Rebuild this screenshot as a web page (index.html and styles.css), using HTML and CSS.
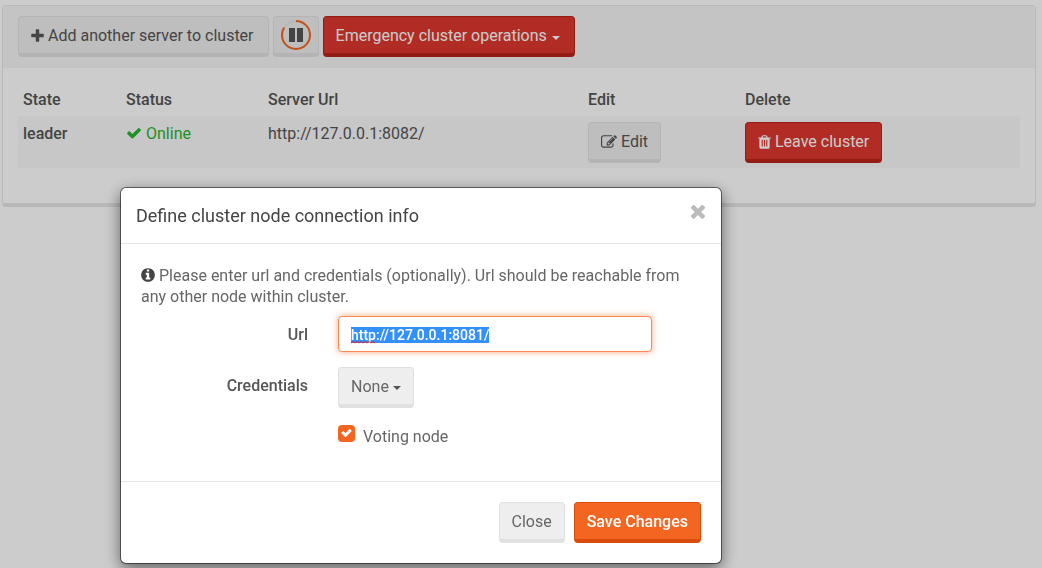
FILE: index.html
```html
<!DOCTYPE html>
<html lang="en">
<head>
<meta charset="utf-8">
<title>Cluster</title>
<link rel="stylesheet" href="styles.css">
</head>
<body>
<main class="panel">
  <div class="panel-heading">
    <button type="button" class="btn"><svg class="icon icon-narrow" viewBox="192 0 1408 1792" aria-hidden="true"><path d="M1600 736v192q0 40-28 68t-68 28h-416v416q0 40-28 68t-68 28h-192q-40 0-68-28t-28-68v-416h-416q-40 0-68-28t-28-68v-192q0-40 28-68t68-28h416v-416q0-40 28-68t68-28h192q40 0 68 28t28 68v416h416q40 0 68 28t28 68z"/></svg>Add another server to cluster</button>
    <button type="button" class="btn btn-pause" aria-label="Pause refresh"><svg class="pause" viewBox="0 0 32 32" aria-hidden="true"><circle class="pause-track" cx="16" cy="16" r="14"/><circle class="pause-ring" cx="16" cy="16" r="14" pathLength="100" stroke-dasharray="84 16" transform="rotate(-90 16 16)"/><path class="pause-bars" d="M9 9h6v14H9zM17 9h6v14h-6z"/></svg></button>
    <button type="button" class="btn btn-danger" aria-haspopup="menu">Emergency cluster operations<span class="caret"></span></button>
  </div>
  <div class="panel-body">
    <table class="nodes">
      <colgroup><col class="col-state"><col class="col-status"><col class="col-url"><col class="col-edit"><col></colgroup>
      <thead>
        <tr><th scope="col">State</th><th scope="col">Status</th><th scope="col">Server Url</th><th scope="col">Edit</th><th scope="col">Delete</th></tr>
      </thead>
      <tbody>
        <tr>
          <th scope="row">leader</th>
          <td class="online"><svg class="icon" viewBox="0 0 1792 1792" aria-hidden="true"><path d="M1671 566q0 40-28 68l-724 724-136 136q-28 28-68 28t-68-28l-136-136-362-362q-28-28-28-68t28-68l136-136q28-28 68-28t68 28l294 295 656-657q28-28 68-28t68 28l136 136q28 28 28 68z"/></svg>Online</td>
          <td>http://127.0.0.1:8082/</td>
          <td><button type="button" class="btn"><svg class="icon" viewBox="0 0 1792 1792" aria-hidden="true"><path d="M888 1184l116-116-152-152-116 116v56h96v96h56zm440-720q-16-16-33 1l-350 350q-17 17-1 33t33-1l350-350q17-17 1-33zm80 594v190q0 119-84.5 203.5t-203.5 84.5h-832q-119 0-203.5-84.5t-84.5-203.5v-832q0-119 84.5-203.5t203.5-84.5h832q63 0 117 25 15 7 18 23 3 17-9 29l-49 49q-14 14-32 8-23-6-45-6h-832q-66 0-113 47t-47 113v832q0 66 47 113t113 47h832q66 0 113-47t47-113v-126q0-13 9-22l64-64q15-15 35-7t20 29zm-96-738l288 288-672 672h-288v-288zm444 132l-92 92-288-288 92-92q28-28 68-28t68 28l152 152q28 28 28 68t-28 68z"/></svg>Edit</button></td>
          <td><button type="button" class="btn btn-danger"><svg class="icon icon-narrow" viewBox="192 0 1408 1792" aria-hidden="true"><path d="M704 1376v-704q0-14-9-23t-23-9h-64q-14 0-23 9t-9 23v704q0 14 9 23t23 9h64q14 0 23-9t9-23zm256 0v-704q0-14-9-23t-23-9h-64q-14 0-23 9t-9 23v704q0 14 9 23t23 9h64q14 0 23-9t9-23zm256 0v-704q0-14-9-23t-23-9h-64q-14 0-23 9t-9 23v704q0 14 9 23t23 9h64q14 0 23-9t9-23zm-544-992h448l-48-117q-7-9-17-11h-317q-10 2-17 11zm928 32v64q0 14-9 23t-23 9h-96v948q0 83-47 143.5t-113 60.5h-832q-66 0-113-58.5t-47-141.5v-952h-96q-14 0-23-9t-9-23v-64q0-14 9-23t23-9h309l70-167q15-37 54-63t79-26h320q40 0 79 26t54 63l70 167h309q14 0 23 9t9 23z"/></svg>Leave cluster</button></td>
        </tr>
      </tbody>
    </table>
  </div>
</main>

<div class="backdrop">
  <form class="modal" role="dialog" aria-modal="true" aria-labelledby="modal-title">
    <header class="modal-header">
      <h1 class="modal-title" id="modal-title">Define cluster node connection info</h1>
      <button type="button" class="close" aria-label="Dismiss"><svg viewBox="302 302 1188 1252" aria-hidden="true"><path d="M1490 1322q0 40-28 68l-136 136q-28 28-68 28t-68-28l-294-294-294 294q-28 28-68 28t-68-28l-136-136q-28-28-28-68t28-68l294-294-294-294q-28-28-28-68t28-68l136-136q28-28 68-28t68 28l294 294 294-294q28-28 68-28t68 28l136 136q28 28 28 68t-28 68l-294 294 294 294q28 28 28 68z"/></svg></button>
    </header>
    <div class="modal-body">
      <p class="hint"><svg class="icon icon-info" viewBox="128 0 1536 1792" aria-hidden="true"><path d="M1152 1376v-160q0-14-9-23t-23-9h-96v-512q0-14-9-23t-23-9h-320q-14 0-23 9t-9 23v160q0 14 9 23t23 9h96v320h-96q-14 0-23 9t-9 23v160q0 14 9 23t23 9h448q14 0 23-9t9-23zm-128-896v-160q0-14-9-23t-23-9h-192q-14 0-23 9t-9 23v160q0 14 9 23t23 9h192q14 0 23-9t9-23zm640 416q0 209-103 385.5t-279.5 279.5-385.5 103-385.5-103-279.5-279.5-103-385.5 103-385.5 279.5-279.5 385.5-103 385.5 103 279.5 279.5 103 385.5z"/></svg>Please enter url and credentials (optionally). Url should be reachable from any other node within cluster.</p>
      <div class="fields">
        <label class="field-label" for="node-url">Url</label>
        <div class="url-field">
          <input class="text-input" id="node-url" type="text" value="http://127.0.0.1:8081/" spellcheck="false" autofocus>
          <svg class="squiggle" viewBox="0 0 26 3" aria-hidden="true"><path d="M0 2l2-1.500 2 1.500 2-1.500 2 1.500 2-1.500 2 1.500 2-1.500 2 1.500 2-1.500 2 1.500 2-1.500 2 1.500"/></svg>
        </div>
        <label class="field-label" for="credentials">Credentials</label>
        <div class="select-wrap">
          <select class="btn select" id="credentials"><option>None</option></select>
          <span class="caret caret-select"></span>
        </div>
        <label class="check-label"><input class="check" type="checkbox" checked>Voting node</label>
      </div>
    </div>
    <footer class="modal-footer">
      <button type="button" class="btn">Close</button>
      <button type="submit" class="btn btn-primary">Save Changes</button>
    </footer>
  </form>
</div>
<script src="script.js"></script>
</body>
</html>
```

FILE: styles.css
```css
* { box-sizing: border-box; }

body {
  margin: 5px 6px 0 2px;
  background: #fff;
  color: #555;
  font: 16px/22px Roboto, sans-serif;
}

.panel {
  background: #fff;
  border: 1px solid #e7e7e7;
  border-bottom-width: 4px;
  border-radius: 4px;
}

.panel-heading {
  display: flex;
  gap: 4px;
  padding: 10px 15px 11px;
  background: #f6f6f6;
}

.panel-body { padding: 15px 15px 35px; }

.btn {
  display: inline-flex;
  align-items: center;
  height: 41px;
  padding: 2px 12px 0;
  border: 1px solid #e1e1e1;
  border-bottom-width: 4px;
  border-radius: 4px;
  background: #eee;
  color: #555;
  font: inherit;
  white-space: nowrap;
}

.panel-heading .btn { padding: 2px 14px 0 12px; }
.btn-danger { background: #dd372d; border-color: #b8241a; color: #fff; }
.btn-primary { background: #f36622; border-color: #d94c0c; color: #fff; font-weight: 500; }

.icon {
  width: 16px;
  height: 16px;
  margin-right: 4px;
  fill: currentColor;
  vertical-align: -2px;
}

.icon-narrow { width: 13px; }
.icon-info { width: 14px; }

.caret {
  margin: 3px 0 0 5px;
  border: 4px solid transparent;
  border-top-color: currentColor;
  border-bottom: 0;
}

.panel-heading .btn-pause { padding: 0 6px; }
.pause { width: 32px; height: 32px; fill: none; stroke-width: 2; }
.pause-track { stroke: #e6e6e6; }
.pause-ring { stroke: #f36622; }
.pause-bars { fill: #555; }

.nodes {
  width: 100%;
  max-width: 1002px;
  table-layout: fixed;
  border-collapse: collapse;
  text-align: left;
}

.nodes th, .nodes td { padding: 6px 5px 5px; vertical-align: top; }
.nodes th { font-weight: 500; }
.nodes tbody tr { background: #f9f9f9; line-height: 24px; }
.nodes .btn { vertical-align: top; }
.nodes .online { color: #27b62c; }
.col-state { width: 103px; }
.col-status { width: 142px; }
.col-url { width: 320px; }
.col-edit { width: 157px; }

.backdrop {
  position: fixed;
  inset: 0;
  padding: 187px 0 0 120px;
  background: rgba(0, 0, 0, .2);
}

.modal {
  max-width: 602px;
  border: 1px solid rgba(0, 0, 0, .5);
  border-radius: 6px;
  background: #fff;
  background-clip: padding-box;
  box-shadow: 0 5px 15px rgba(0, 0, 0, .5);
  color: #666;
}

.modal-header {
  display: flex;
  justify-content: space-between;
  align-items: flex-start;
  padding: 15px;
  border-bottom: 1px solid #e5e5e5;
}

.modal-title { margin: 0; color: #444; font-size: 18px; line-height: 25px; font-weight: 400; }

.close { padding: 1px; border: 0; background: none; line-height: 0; }
.close svg { width: 14px; height: 15px; fill: #bbb; }

.modal-body { padding: 21px 20px 32px; }
.hint { margin: 0 0 9px; line-height: 21px; }
.hint .icon { color: #444; }

.fields {
  display: grid;
  grid-template-columns: 167px 1fr;
  column-gap: 30px;
  row-gap: 15px;
  padding-right: 49px;
}

.field-label { padding-top: 8px; color: #555; font-weight: 500; text-align: right; }

.url-field, .select-wrap { position: relative; }
.select-wrap { justify-self: start; }

.text-input {
  display: block;
  width: 100%;
  height: 36px;
  padding: 2px 12px 0;
  border: 1px solid #f98a55;
  border-radius: 4px;
  outline: 0;
  background: #fff;
  box-shadow: 0 0 6px rgba(245, 106, 36, .6);
  color: #444;
  font: 500 14px/20px Roboto, sans-serif;
}

.text-input::selection { background: #3390ff; color: #fff; }

.squiggle {
  position: absolute;
  left: 13px;
  bottom: 8px;
  width: 26px;
  height: 3px;
  fill: none;
  stroke: #e0202c;
}

.select { display: block; padding: 2px 24px 0 12px; appearance: none; color: #666; }
.caret-select { position: absolute; top: 16px; right: 13px; color: #555; }

.check-label { display: flex; grid-column: 2; padding-top: 2px; line-height: 24px; }

.check {
  display: grid;
  place-content: center;
  width: 17px;
  height: 17px;
  margin: 0 8px 0 0;
  border-radius: 4px;
  background: #f36622;
  appearance: none;
}

.check:checked::after {
  content: "";
  box-sizing: border-box;
  width: 9px;
  height: 6px;
  margin-bottom: 3px;
  border: solid #fff;
  border-width: 0 0 3px 3px;
  transform: rotate(-45deg);
}

.modal-footer {
  display: flex;
  justify-content: flex-end;
  gap: 9px;
  padding: 20px;
  border-top: 1px solid #e5e5e5;
}

.modal-footer .btn:not(.btn-primary) { color: #666; }
```

FILE: script.js
```js
const url = document.getElementById("node-url");
url.focus();
url.select();
```
